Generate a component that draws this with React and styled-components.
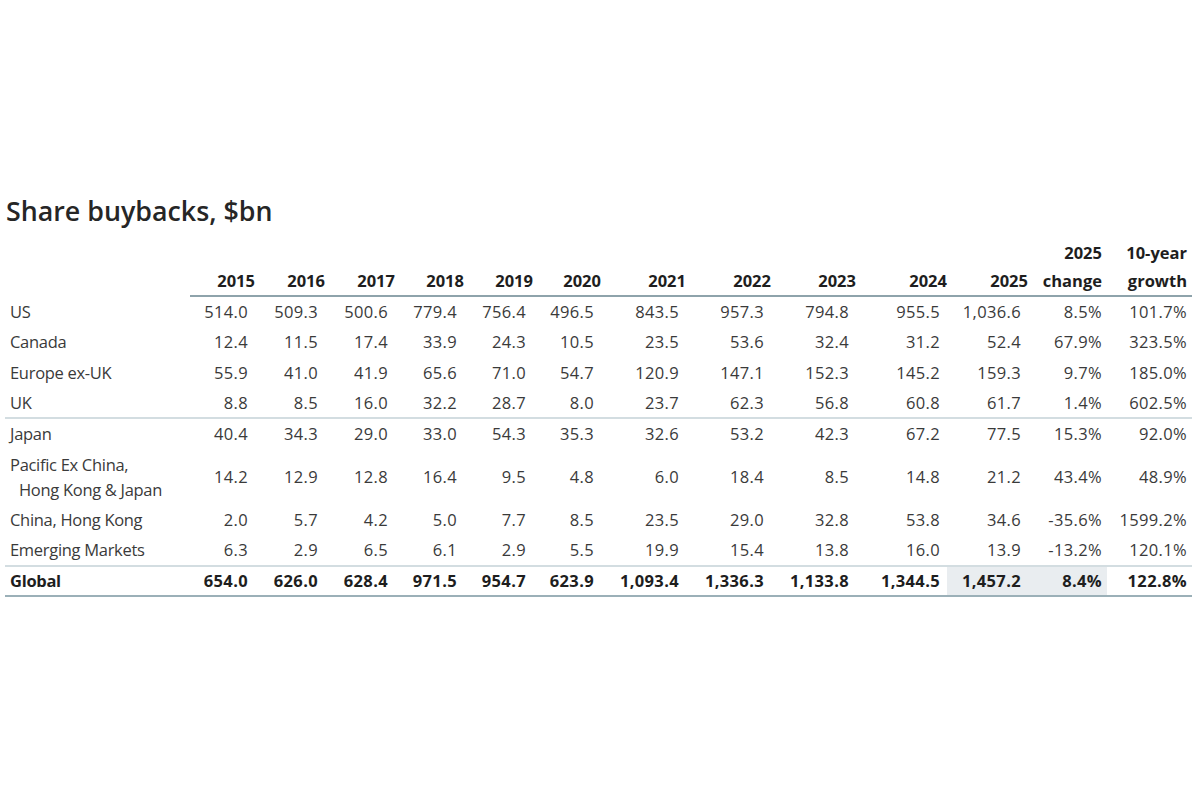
import React from "react";
import styled, { createGlobalStyle } from "styled-components";

const GlobalStyle = createGlobalStyle`
    html, body {
        margin: 0;
        padding: 0;
        background: #ffffff;
    }
    body {
        width: 1200px;
        height: 800px;
        overflow: hidden;
        font-family: "Open Sans", Lato, "Liberation Sans", sans-serif;
    }
`;

const Page = styled.div`
    padding: 193px 8px 0 5px;
`;

const Title = styled.h1`
    margin: 0 0 0 1px;
    font-size: 26.8px;
    line-height: 35px;
    font-weight: 600;
    color: #262626;
`;

const Table = styled.table`
    margin-top: 11px;
    width: 1187px;
    table-layout: fixed;
    border-collapse: collapse;
    font-size: 16.5px;
    color: #3a3a3a;
`;

const HeadCell = styled.th`
    vertical-align: bottom;
    text-align: right;
    font-weight: 700;
    color: #1e1e1e;
    line-height: 28px;
    padding: 0 ${(p) => (p.$year ? 0 : 5)}px 0 0;
    border-bottom: ${(p) => (p.$blank ? "none" : "2px solid #8ea3ab")};
    white-space: nowrap;
`;

const Row = styled.tr`
    height: ${(p) => (p.$tall ? 56 : 30.5)}px;
    border-bottom: ${(p) =>
        p.$rule === "thick"
            ? "2px solid #9bb0b8"
            : p.$rule === "thin"
            ? "2px solid #d3dde1"
            : "none"};
    font-weight: ${(p) => (p.$total ? 700 : 400)};
    color: ${(p) => (p.$total ? "#1e1e1e" : "#3a3a3a")};
`;

const Label = styled.td`
    padding: 0 0 0 5px;
    line-height: 25px;
    letter-spacing: -0.3px;
    white-space: nowrap;
`;

const Indent = styled.span`
    display: block;
    padding-left: 9px;
`;

const Value = styled.td`
    text-align: right;
    padding: 0 ${(p) => (p.$pct ? 5 : 7)}px 0 0;
    letter-spacing: 0.35px;
    background: ${(p) => (p.$shade ? "#e9edf0" : "transparent")};
    white-space: nowrap;
`;

const years = [
    "2015", "2016", "2017", "2018", "2019", "2020",
    "2021", "2022", "2023", "2024", "2025",
];

const widths = [185, 65, 70, 70, 69, 69, 68, 85, 85, 85, 91, 81, 79, 85];

const rows = [
    { name: "US", v: ["514.0", "509.3", "500.6", "779.4", "756.4", "496.5", "843.5", "957.3", "794.8", "955.5", "1,036.6", "8.5%", "101.7%"] },
    { name: "Canada", v: ["12.4", "11.5", "17.4", "33.9", "24.3", "10.5", "23.5", "53.6", "32.4", "31.2", "52.4", "67.9%", "323.5%"] },
    { name: "Europe ex-UK", v: ["55.9", "41.0", "41.9", "65.6", "71.0", "54.7", "120.9", "147.1", "152.3", "145.2", "159.3", "9.7%", "185.0%"] },
    { name: "UK", rule: "thin", v: ["8.8", "8.5", "16.0", "32.2", "28.7", "8.0", "23.7", "62.3", "56.8", "60.8", "61.7", "1.4%", "602.5%"] },
    { name: "Japan", v: ["40.4", "34.3", "29.0", "33.0", "54.3", "35.3", "32.6", "53.2", "42.3", "67.2", "77.5", "15.3%", "92.0%"] },
    { name: "Pacific Ex China,", sub: "Hong Kong & Japan", tall: true, v: ["14.2", "12.9", "12.8", "16.4", "9.5", "4.8", "6.0", "18.4", "8.5", "14.8", "21.2", "43.4%", "48.9%"] },
    { name: "China, Hong Kong", v: ["2.0", "5.7", "4.2", "5.0", "7.7", "8.5", "23.5", "29.0", "32.8", "53.8", "34.6", "-35.6%", "1599.2%"] },
    { name: "Emerging Markets", rule: "thin", v: ["6.3", "2.9", "6.5", "6.1", "2.9", "5.5", "19.9", "15.4", "13.8", "16.0", "13.9", "-13.2%", "120.1%"] },
    { name: "Global", rule: "thick", total: true, v: ["654.0", "626.0", "628.4", "971.5", "954.7", "623.9", "1,093.4", "1,336.3", "1,133.8", "1,344.5", "1,457.2", "8.4%", "122.8%"] },
];

export default function App() {
    return (
        <>
            <GlobalStyle />
            <Page>
                <Title>Share buybacks, $bn</Title>
                <Table>
                    <colgroup>
                        {widths.map((w, i) => (
                            <col key={i} style={{ width: w }} />
                        ))}
                    </colgroup>
                    <thead>
                        <tr>
                            <HeadCell $blank />
                            {years.map((y) => (
                                <HeadCell key={y} $year>
                                    {y}
                                </HeadCell>
                            ))}
                            <HeadCell>
                                2025
                                <br />
                                change
                            </HeadCell>
                            <HeadCell>
                                10-year
                                <br />
                                growth
                            </HeadCell>
                        </tr>
                    </thead>
                    <tbody>
                        {rows.map((r) => (
                            <Row
                                key={r.name}
                                $tall={r.tall}
                                $rule={r.rule}
                                $total={r.total}
                            >
                                <Label>
                                    {r.name}
                                    {r.sub && <Indent>{r.sub}</Indent>}
                                </Label>
                                {r.v.map((val, i) => (
                                    <Value
                                        key={i}
                                        $pct={i >= 11}
                                        $shade={r.total && (i === 10 || i === 11)}
                                    >
                                        {val}
                                    </Value>
                                ))}
                            </Row>
                        ))}
                    </tbody>
                </Table>
            </Page>
        </>
    );
}
